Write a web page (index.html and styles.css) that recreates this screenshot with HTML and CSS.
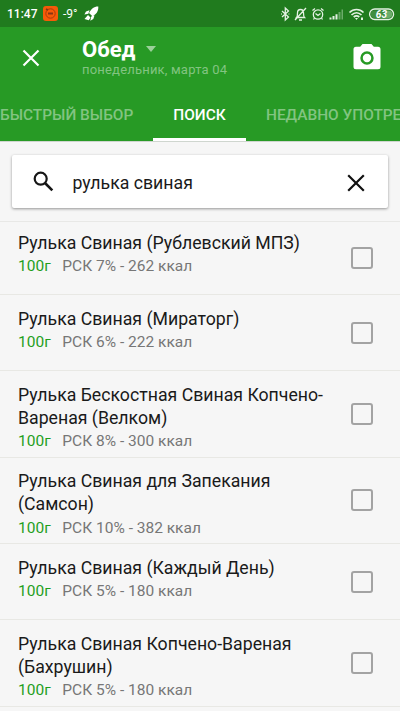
FILE: index.html
```html
<!DOCTYPE html>
<html lang="ru">
<head>
<meta charset="utf-8">
<title>Обед</title>
<link rel="stylesheet" href="styles.css">
</head>
<body>
<div class="status">
  <span class="clock">11:47</span>
  <svg class="app" width="15" height="15" viewBox="0 0 15 15"><rect width="15" height="15" rx="3" fill="#f65a08"/><circle cx="7.500" cy="7.500" r="4.700" fill="none" stroke="#a83c0c" stroke-width="1"/><path d="M5 7.500h5M3 3l2 1" stroke="#873515" stroke-width="1.800"/></svg>
  <span class="temp">-9°</span>
  <svg class="rocket" width="15" height="15" viewBox="0 0 15 15"><path d="M14.300.4C10 .3 7 3 5 7l3.400 3.300C12.400 8.200 14.600 5 14.300.4zM5.500 4.300 2 5.500.4 8.600l4-.9zM10.500 9.500l-1.200 3.500-3 1.800.9-4.300zM4 9l2.500 2.500-1.700 2.700L.5 13z" fill="#fff"/></svg>
  <span class="grow"></span>
  <svg class="system" width="120" height="16" viewBox="0 0 120 16" fill="none" stroke="#e4f1e3" stroke-width="1.300">
    <path d="m4 5 6.500 6L7.300 14V2l3.200 3L4 11M3.300 8h.7M10.600 8h.7"/>
    <path d="M18.500 11.500c1-1 1-2 1-4.500 0-2 1.300-3.500 3-3.500s3 1.500 3 3.500c0 2.500 0 3.500 1 4.500zM21 14h3M17 14 28 2"/>
    <circle cx="40" cy="8.500" r="4.700"/><path d="m37.500 7.500 2.500 2 2.500-2M34.500 4.500l2.500-2M43 2.500l2.500 2M36.500 12l-1 1.500M43.500 12l1 1.500"/>
    <g stroke="none"><path fill="#e4f1e3" d="M51.500 11.500h2v2h-2zM54.500 10h2v3.500h-2zM57.500 8.300h2v5.200h-2z"/><path fill="#6cac6b" d="M60.500 6h2v7.500h-2zM63.500 3.500h1.500v10h-1.500z"/></g>
    <path stroke-width="1.700" d="M71.500 6.500c4-4 10-4 14 0M73.500 9c3-3 7-3 10 0M75.700 11c2-1.700 3.600-1.700 5.600 0"/><path stroke="none" fill="#e4f1e3" d="m77 12 1.500 2 1.500-2zM83 11.500h2v2.500h-2z"/>
    <rect x="91.600" y="3" width="24" height="10.500" rx="5.200" stroke-width="1.300"/>
    <path d="M96.500 4.500H107v7.500H96.500a3.700 3.700 0 0 1 0-7.500z" fill="#408e40" stroke="none"/>
    <path d="M107 4.500h3.500a3.700 3.700 0 0 1 0 7.500H107z" fill="#6cac6b" stroke="none"/>
    <text x="103.400" y="11.700" text-anchor="middle" class="battery">63</text>
  </svg>
</div>
<header class="bar">
  <svg class="close" width="18" height="18" viewBox="0 0 18 18"><path d="m1.500 1.500 15 15M16.500 1.500l-15 15" stroke="#fff" stroke-width="2.200"/></svg>
  <div class="heading">
    <div class="meal"><h1>Обед</h1><span class="caret"></span></div>
    <div class="date">понедельник, марта 04</div>
  </div>
  <svg class="camera" width="28" height="26" viewBox="0 0 28 26"><path fill="#fff" fill-rule="evenodd" d="M9.500 0h9l2.300 2.700H25a2.500 2.500 0 0 1 2.500 2.500v17.600a2.500 2.500 0 0 1-2.500 2.500H3a2.500 2.500 0 0 1-2.500-2.500V5.200A2.500 2.500 0 0 1 3 2.700h4.200zM14 7.300a6.700 6.700 0 1 0 0 13.400 6.700 6.700 0 0 0 0-13.400zm0 2.500a4.200 4.200 0 1 1 0 8.400 4.200 4.200 0 0 1 0-8.400z"/></svg>
</header>
<nav class="tabs">
  <span class="tab quick">БЫСТРЫЙ ВЫБОР</span>
  <span class="tab active">ПОИСК</span>
  <span class="tab recent">НЕДАВНО УПОТРЕБЛЯЛИ</span>
</nav>
<div class="search">
  <svg width="21" height="21" viewBox="0 0 21 21" fill="none" stroke="#161616" stroke-width="2.200"><circle cx="7.700" cy="7.700" r="6"/><path d="m12 12 7.300 7.300" stroke-width="2.600"/></svg>
  <span class="query">рулька свиная</span>
  <svg class="clear" width="18" height="18" viewBox="0 0 18 18"><path d="m1.200 1.200 15.600 15.600M16.800 1.200 1.200 16.800" stroke="#111" stroke-width="2.200"/></svg>
</div>
<ul class="list">
  <li class="row first"><div class="info"><div class="name">Рулька Свиная (Рублевский МПЗ)</div><div class="meta"><span class="amount">100г</span><span>РСК 7% - 262 ккал</span></div></div><span class="check"></span></li>
  <li class="row"><div class="info"><div class="name">Рулька Свиная (Мираторг)</div><div class="meta"><span class="amount">100г</span><span>РСК 6% - 222 ккал</span></div></div><span class="check"></span></li>
  <li class="row tall"><div class="info"><div class="name">Рулька Бескостная Свиная Копчено-<br>Вареная (Велком)</div><div class="meta"><span class="amount">100г</span><span>РСК 8% - 300 ккал</span></div></div><span class="check"></span></li>
  <li class="row tall"><div class="info"><div class="name">Рулька Свиная для Запекания<br>(Самсон)</div><div class="meta"><span class="amount">100г</span><span>РСК 10% - 382 ккал</span></div></div><span class="check"></span></li>
  <li class="row"><div class="info"><div class="name">Рулька Свиная (Каждый День)</div><div class="meta"><span class="amount">100г</span><span>РСК 5% - 180 ккал</span></div></div><span class="check"></span></li>
  <li class="row tall"><div class="info"><div class="name">Рулька Свиная Копчено-Вареная<br>(Бахрушин)</div><div class="meta"><span class="amount">100г</span><span>РСК 5% - 180 ккал</span></div></div><span class="check"></span></li>
</ul>
</body>
</html>
```
FILE: styles.css
```css
* { box-sizing: border-box; }
body {
  margin: 0;
  height: 711px;
  overflow: hidden;
  background: #f6f6f6;
  font-family: Roboto, "Noto Sans", sans-serif;
  color: #1a1a1a;
}
.status {
  display: flex;
  align-items: center;
  height: 27px;
  padding: 0 2px 0 7px;
  background: #207b1e;
  color: #fff;
}
.clock { width: 36px; font-size: 12px; font-weight: 500; }
.temp { width: 21px; margin-left: 5px; font-size: 12px; }
.grow { flex: 1; }
.battery { font: italic 700 10px Roboto, sans-serif; fill: #fff; stroke: none; }
.bar {
  display: flex;
  height: 63px;
  padding: 0 19px 0 22px;
  background: #279a25;
}
.close { margin-top: 22px; }
.heading { flex: 1; margin: 10px 0 0 42px; }
.meal { display: flex; align-items: center; height: 25px; }
h1 { margin: 0; font-size: 22px; line-height: 26px; font-weight: 700; color: #fff; }
.caret {
  margin: -1px 0 0 11px;
  border: 5px solid transparent;
  border-top: 6px solid #9bd09a;
  border-bottom: 0;
}
.date { font-size: 13px; line-height: 15px; letter-spacing: .2px; color: #82c481; }
.camera { margin-top: 17px; }
.tabs {
  display: flex;
  height: 52px;
  overflow: hidden;
  background: #279a25;
  white-space: nowrap;
  border-bottom: 1px solid #cfd6cf;
}
.tab { flex: none; font-size: 15.400px; font-weight: 500; line-height: 51px; color: #82c481; }
.quick { width: 153px; }
.active { width: 93px; text-align: center; color: #fff; border-bottom: 3px solid #fff; }
.recent { margin-left: 20px; }
.search {
  display: flex;
  align-items: center;
  height: 53px;
  margin: 13px 12px 13px;
  padding: 0 23px 0 21px;
  background: #fff;
  border-radius: 2px;
  box-shadow: 0 1px 3px rgba(0, 0, 0, .4);
}
.query { flex: 1; margin: 3px 0 0 18.500px; font-size: 17.700px; }
.clear { margin-top: 2px; }
.list { margin: 0; padding: 0; list-style: none; border-top: 1px solid #e8e8e6; }
.row {
  display: flex;
  align-items: center;
  height: 76px;
  padding: 0 27px 0 18px;
  border-bottom: 1px solid #e8e8e4;
}
.first { height: 73px; padding-bottom: 1px; }
.tall { height: 86.500px; }
.info { flex: 1; align-self: flex-start; padding-top: 12.600px; }
.first .info { padding-top: 9.600px; }
.name { font-size: 17.700px; line-height: 23.200px; }
.meta { display: flex; gap: 11.700px; font-size: 15.500px; line-height: 22.500px; color: #777; }
.amount { color: #1f9f1d; }
.check { width: 22px; height: 22px; border: 2px solid #a3a3a3; border-radius: 3px; }
```
